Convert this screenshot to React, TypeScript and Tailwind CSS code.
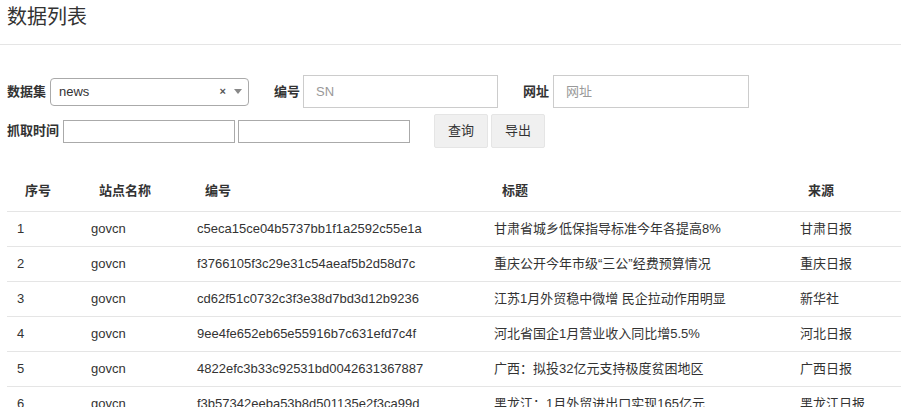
const rows = [
  ['1', 'govcn', 'c5eca15ce04b5737bb1f1a2592c55e1a', '甘肃省城乡低保指导标准今年各提高8%', '甘肃日报'],
  ['2', 'govcn', 'f3766105f3c29e31c54aeaf5b2d58d7c', '重庆公开今年市级“三公”经费预算情况', '重庆日报'],
  ['3', 'govcn', 'cd62f51c0732c3f3e38d7bd3d12b9236', '江苏1月外贸稳中微增 民企拉动作用明显', '新华社'],
  ['4', 'govcn', '9ee4fe652eb65e55916b7c631efd7c4f', '河北省国企1月营业收入同比增5.5%', '河北日报'],
  ['5', 'govcn', '4822efc3b33c92531bd0042631367887', '广西：拟投32亿元支持极度贫困地区', '广西日报'],
  ['6', 'govcn', 'f3b57342eeba53b8d501135e2f3ca99d', '黑龙江：1月外贸进出口实现165亿元', '黑龙江日报'],
];

const headers = ['序号', '站点名称', '编号', '标题', '来源'];
const widths = ['w-[74px]', 'w-[106px]', 'w-[297px]', 'w-[306px]', ''];

export default function App() {
  return (
    <div
      className="h-[407px] overflow-hidden bg-white text-[#333]"
      style={{ fontFamily: '"Liberation Sans", "Noto Sans CJK SC", sans-serif' }}
    >
      <div className="h-[45px] border-b border-[#e5e5e5] pl-[7px] pt-[3px] text-[20px] leading-[28px] text-[#333]">
        数据列表
      </div>

      <div className="pl-[7px] pt-[30px]">
        <div className="flex h-[33px] items-center text-[13px]">
          <span className="font-bold">数据集</span>
          <div className="ml-[4px] flex h-[28px] w-[199px] items-center rounded-[4px] border border-[#aaa] pl-[8px] pr-[6px]">
            <span className="flex-1">news</span>
            <span className="text-[11px] font-bold leading-none text-[#555]">×</span>
            <span className="ml-[8px] h-0 w-0 border-x-[4px] border-t-[5px] border-x-transparent border-t-[#888]" />
          </div>
          <span className="ml-[25px] font-bold">编号</span>
          <input
            className="ml-[3px] h-[33px] w-[195px] border border-[#ccc] pl-[12px] text-[13px] outline-none placeholder:text-[#999]"
            placeholder="SN"
          />
          <span className="ml-[25px] font-bold">网址</span>
          <input
            className="ml-[4px] h-[33px] w-[196px] border border-[#ccc] pl-[12px] text-[13px] outline-none placeholder:text-[#999]"
            placeholder="网址"
          />
        </div>

        <div className="mt-[6px] flex h-[34px] items-center text-[13px]">
          <span className="font-bold">抓取时间</span>
          <input className="ml-[4px] h-[23px] w-[172px] border border-[#aaa] outline-none" />
          <input className="ml-[3px] h-[23px] w-[172px] border border-[#aaa] outline-none" />
          <button className="ml-[24px] h-[34px] w-[54px] rounded-[2px] border border-[#e5e5e5] bg-[#f0f0f0]">
            查询
          </button>
          <button className="ml-[3px] h-[34px] w-[54px] rounded-[2px] border border-[#e5e5e5] bg-[#f0f0f0]">
            导出
          </button>
        </div>
      </div>

      <div className="pl-[7px] pt-[22px]">
        <table className="w-[894px] table-fixed border-collapse text-[13px]">
          <thead>
            <tr className="h-[41px] border-b border-[#e5e5e5]">
              {headers.map((h, i) => (
                <th key={h} className={`${widths[i]} pl-[18px] text-left text-[13px] font-bold`}>
                  {h}
                </th>
              ))}
            </tr>
          </thead>
          <tbody>
            {rows.map((r) => (
              <tr key={r[0]} className="h-[35px] border-b border-[#e5e5e5]">
                {r.map((c, i) => (
                  <td key={i} className="whitespace-nowrap pl-[10px]">
                    {c}
                  </td>
                ))}
              </tr>
            ))}
          </tbody>
        </table>
      </div>
    </div>
  );
}
